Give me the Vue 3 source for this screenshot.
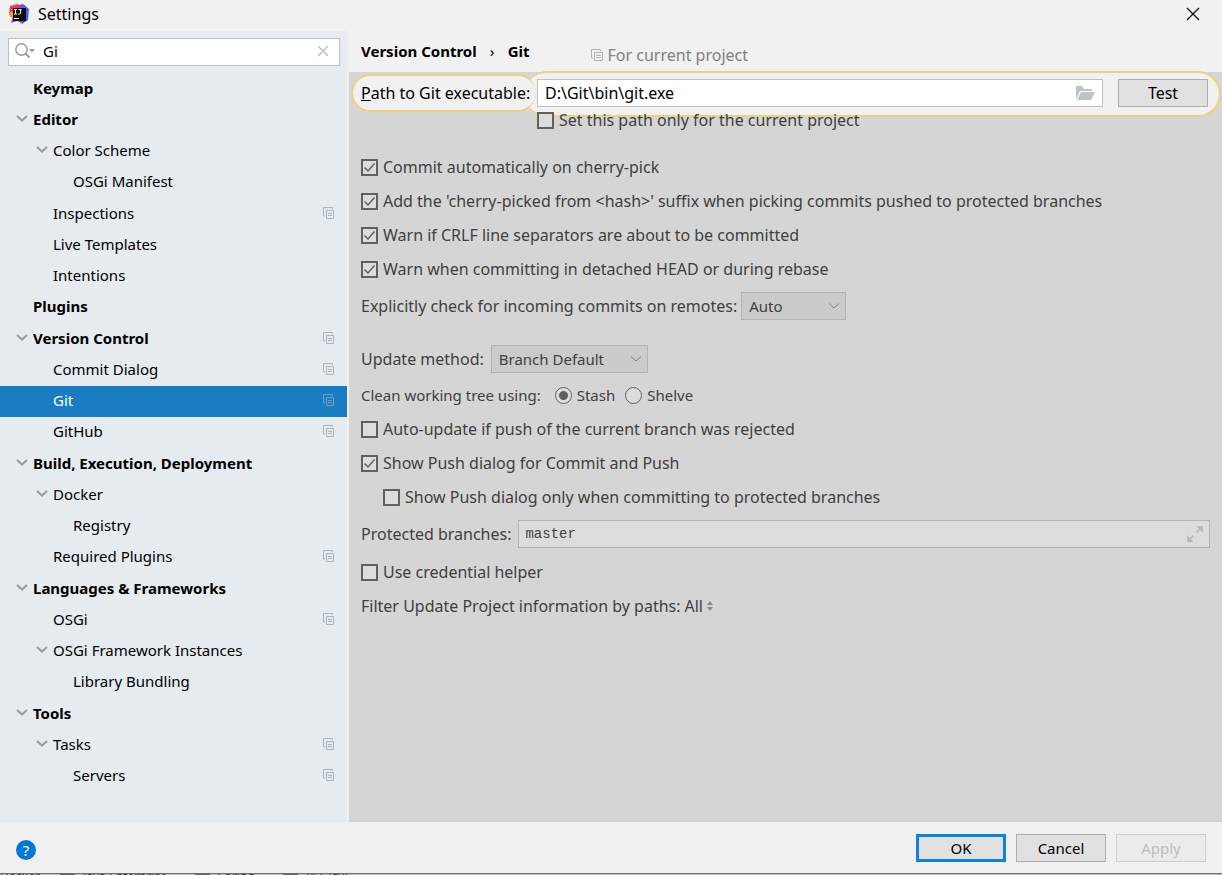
<script setup>
import { ref } from 'vue'

const query = ref('Gi')
const gitPath = ref('D:\\Git\\bin\\git.exe')
const branches = ref('master')
const selected = ref('Git')
const clean = ref('stash')
const incoming = ref('Auto')
const method = ref('Branch Default')
const pathOnly = ref(false)
const autoUpdate = ref(false)
const pushDialog = ref(true)
const pushProtected = ref(false)
const credential = ref(false)

const commitOptions = ref([
  { label: 'Commit automatically on cherry-pick', on: true },
  { label: "Add the 'cherry-picked from <hash>' suffix when picking commits pushed to protected branches", on: true },
  { label: 'Warn if CRLF line separators are about to be committed', on: true },
  { label: 'Warn when committing in detached HEAD or during rebase', on: true },
])

const tree = [
  { label: 'Keymap', level: 0 },
  { label: 'Editor', level: 0, open: true },
  { label: 'Color Scheme', level: 1, open: true },
  { label: 'OSGi Manifest', level: 2 },
  { label: 'Inspections', level: 1, copy: true },
  { label: 'Live Templates', level: 1 },
  { label: 'Intentions', level: 1 },
  { label: 'Plugins', level: 0 },
  { label: 'Version Control', level: 0, open: true, copy: true },
  { label: 'Commit Dialog', level: 1, copy: true },
  { label: 'Git', level: 1, copy: true },
  { label: 'GitHub', level: 1, copy: true },
  { label: 'Build, Execution, Deployment', level: 0, open: true },
  { label: 'Docker', level: 1, open: true },
  { label: 'Registry', level: 2 },
  { label: 'Required Plugins', level: 1, copy: true },
  { label: 'Languages & Frameworks', level: 0, open: true },
  { label: 'OSGi', level: 1, copy: true },
  { label: 'OSGi Framework Instances', level: 1, open: true },
  { label: 'Library Bundling', level: 2 },
  { label: 'Tools', level: 0, open: true },
  { label: 'Tasks', level: 1, open: true, copy: true },
  { label: 'Servers', level: 2, copy: true },
]
</script>

<template>
  <div class="window">
    <header class="titlebar">
      <svg class="logo" viewBox="0 0 20 20" aria-hidden="true">
        <path d="M1 2 9 0 12 4 4 13 0 10Z" fill="#f9364f" />
        <path d="M0 9 5 7 8 15 1 13Z" fill="#fc9a2b" />
        <path d="M10 1 14 0 20 5 19 16 13 20 9 16Z" fill="#3b63f0" />
        <path d="M12 1 15 1 18 4 16 8 11 6Z" fill="#7a4fe0" />
        <path d="M2 19 4 12 11 15 13 19 8 17Z" fill="#b13ae0" />
        <path d="M4 4h13v13H4z" fill="#0a0a0a" />
        <path d="M5 5.500h3M6.500 5.500v4.500M5 10h3M9.500 5.500h3M11.700 5.500v3.500q0 1-1 1h-1.500M5 14.500h5" stroke="#fff" stroke-width="1" fill="none" />
      </svg>
      <h1>Settings</h1>
      <button class="close" aria-label="Close">
        <svg viewBox="0 0 12 12"><path d="M0 0 12 12M12 0 0 12" stroke="#111" stroke-width="1.300" fill="none" /></svg>
      </button>
    </header>

    <div class="body">
      <aside class="sidebar">
        <div class="search">
          <svg class="glass" viewBox="0 0 20 16" aria-hidden="true">
            <circle cx="6.500" cy="6.500" r="5.700" fill="none" stroke="#8f9ba4" stroke-width="1.400" />
            <path d="M10.500 10.500 14.500 14.500" stroke="#8f9ba4" stroke-width="1.800" />
            <path d="M14 6h6l-3 3.500Z" fill="#8f9ba4" />
          </svg>
          <input v-model="query" type="text" aria-label="Search settings" />
          <button class="clear" aria-label="Clear search">
            <svg viewBox="0 0 10 10"><path d="M0 0 10 10M10 0 0 10" stroke="#b4bcc1" stroke-width="1.200" fill="none" /></svg>
          </button>
        </div>
        <nav class="tree" aria-label="Settings sections">
          <button
            v-for="item in tree"
            :key="item.label"
            class="node"
            :class="['level' + item.level, { selected: selected === item.label }]"
            @click="selected = item.label"
          >
            <span class="twist">
              <svg v-if="item.open" viewBox="0 0 12 8"><path d="M1 1 6 5.500 11 1" fill="none" stroke="#999da0" stroke-width="2.200" /></svg>
            </span>
            <span class="name">{{ item.label }}</span>
            <svg v-if="item.copy" class="copy" viewBox="0 0 12 12">
              <path d="M9.500 2V.5H.5v8.500H2" fill="none" stroke="#a9b4bc" />
              <path d="M3.500 11.500v-8h7v8z" fill="none" stroke="#a9b4bc" />
              <path d="M5 6.500h4M5 8.500h4" stroke="#a9b4bc" />
            </svg>
          </button>
        </nav>
      </aside>

      <main class="main">
        <div class="crumbs">
          <b>Version Control</b>
          <span class="sep">›</span>
          <b>Git</b>
          <span class="scope">
            <svg class="copy" viewBox="0 0 12 12" aria-hidden="true">
              <path d="M9.500 2V.5H.5v8.500H2" fill="none" stroke="#a9b4bc" />
              <path d="M3.500 11.500v-8h8v8z" fill="none" stroke="#a9b4bc" />
              <path d="M5 6.500h5M5 8.500h5" stroke="#a9b4bc" />
            </svg>
            For current project
          </span>
        </div>

        <form class="panel" @submit.prevent>
          <div class="spotlight">
            <label class="halo caption" for="git-path"><span><u>P</u>ath to Git executable:</span></label>
            <div class="halo wide">
              <div class="field path">
                <input id="git-path" v-model="gitPath" type="text" />
                <button type="button" class="icon" aria-label="Browse">
                  <svg class="folder" viewBox="0 0 19 15"><path d="M0 0h6l2 3h8v2H4L1 12H0z" fill="#bcc4c9" /><path d="M5 6h14l-4 8H1z" fill="#bcc4c9" /></svg>
                </button>
              </div>
              <button type="button" class="btn test">Test</button>
            </div>
          </div>

          <div class="shade">
            <label class="check only"><input v-model="pathOnly" type="checkbox" />Set this path only for the current project</label>

            <div class="stack commits">
              <label v-for="o in commitOptions" :key="o.label" class="check"><input v-model="o.on" type="checkbox" />{{ o.label }}</label>
            </div>

            <div class="row incoming">
              <label for="incoming">Explicitly check for incoming commits on remotes:</label>
              <span class="select">
                <select id="incoming" v-model="incoming"><option>Auto</option><option>Always</option><option>Never</option></select>
                <svg viewBox="0 0 10 6"><path d="M0 .5 5 5 10 .5" fill="none" stroke="#808080" /></svg>
              </span>
            </div>

            <div class="row method">
              <label for="method">Update method:</label>
              <span class="select long">
                <select id="method" v-model="method"><option>Branch Default</option><option>Merge</option><option>Rebase</option></select>
                <svg viewBox="0 0 10 6"><path d="M0 .5 5 5 10 .5" fill="none" stroke="#808080" /></svg>
              </span>
            </div>

            <div class="row clean" role="radiogroup" aria-label="Clean working tree using">
              <span class="title">Clean working tree using:</span>
              <label class="check"><input v-model="clean" type="radio" name="clean" value="stash" />Stash</label>
              <label class="check"><input v-model="clean" type="radio" name="clean" value="shelve" />Shelve</label>
            </div>

            <div class="stack push">
              <label class="check"><input v-model="autoUpdate" type="checkbox" />Auto-update if push of the current branch was rejected</label>
              <label class="check"><input v-model="pushDialog" type="checkbox" />Show Push dialog for Commit and Push</label>
              <label class="check nested"><input v-model="pushProtected" type="checkbox" />Show Push dialog only when committing to protected branches</label>
            </div>

            <div class="row protected">
              <label for="branches">Protected branches:</label>
              <div class="field dim">
                <input id="branches" v-model="branches" type="text" />
                <button type="button" class="icon" aria-label="Expand">
                  <svg class="expand" viewBox="0 0 16 16"><path d="M9 0h7v7zM0 9v7h7z" fill="#b4babd" /><path d="M13 3 9.500 6.500M3 13 6.500 9.500" stroke="#b4babd" stroke-width="1.600" /></svg>
                </button>
              </div>
            </div>

            <label class="check credential"><input v-model="credential" type="checkbox" />Use credential helper</label>

            <div class="row filter">
              <span>Filter Update Project information by paths:</span>
              <button type="button" class="link">
                All
                <svg viewBox="0 0 6 10"><path d="M0 4 3 0 6 4zM0 6h6L3 10z" fill="#8a8a8a" /></svg>
              </button>
            </div>
          </div>
        </form>
      </main>
    </div>

    <footer class="footer">
      <button class="help" aria-label="Help">?</button>
      <button class="btn primary">OK</button>
      <button class="btn">Cancel</button>
      <button class="btn" disabled>Apply</button>
    </footer>
    <div class="behind" aria-hidden="true">
      <span class="first">Docker</span><i></i><span>Java Enterprise</span><i class="far"></i><span>Spring</span><i class="far"></i><span>RESTful</span>
    </div>
  </div>
</template>

<style>
body { background: #f0f0f0; }
#app { display: flex; min-height: 100vh; }
</style>

<style scoped>
* { box-sizing: border-box; }
.window {
  flex: 1;
  display: flex;
  flex-direction: column;
  min-width: 0;
  background: #f0f0f0;
  color: #000;
  font: 15px/20px "Noto Sans", "Open Sans", sans-serif;
}
button, input, select { font: inherit; color: inherit; margin: 0; padding: 0; border: 0; background: none; border-radius: 0; outline: 0; }
svg { display: block; overflow: visible; flex: none; }

.titlebar { display: flex; align-items: center; height: 31px; padding: 0 23px 3px 9px; gap: 9px; background: #f1f1f1; }
.logo { width: 20px; height: 20px; }
h1 { flex: 1; margin: 0; font: inherit; font-size: 16px; }
.close svg { width: 12px; height: 12px; }

.body { flex: 1; display: flex; }
.sidebar { flex: none; width: 347px; margin-right: 2px; background: #e5ebef; }
.search { display: flex; align-items: center; height: 28px; margin: 7px 7px 8px 8px; padding: 0 11px 2px 6px; border: 1px solid #bcc0c2; background: #fff; }
.glass { width: 20px; height: 16px; }
.search input { flex: 1; min-width: 0; padding-left: 8px; }
.clear svg { width: 10px; height: 10px; }

.tree { display: flex; flex-direction: column; }
.node { display: flex; align-items: center; height: 31px; text-align: left; padding-right: 12px; padding-bottom: 3px; }
.node:nth-child(4n) { margin-bottom: 1px; }
.twist { width: 12px; margin-right: 5px; }
.twist svg { width: 12px; height: 8px; }
.name { flex: 1; }
.level0 { padding-left: 16px; font-weight: 700; }
.level1 { padding-left: 36px; }
.level2 { padding-left: 56px; }
.selected { background: #1a7dc4; color: #fff; }
.copy { width: 12px; height: 12px; }
.selected .copy { opacity: .6; }

.main { flex: 1; min-width: 0; display: flex; flex-direction: column; }
.crumbs { display: flex; align-items: center; height: 41px; padding: 0 0 2px 12px; background: #f1f1f1; }
.crumbs b { font-weight: 700; }
.sep { width: 31px; text-align: center; }
.scope { display: flex; align-items: center; gap: 5px; margin-left: 61px; padding-top: 8px; font-size: 16px; color: #808080; }

.panel { flex: 1; background: #d5d5d5; color: #404040; font-size: 16px; }
.spotlight { display: flex; align-items: center; height: 44px; padding: 0 0 2px 2px; color: #000; }
.halo { display: flex; align-items: center; border: 2px solid #ecd27c; background: #f1f1f1; }
.caption { position: relative; z-index: 1; width: 185px; height: 38px; margin-right: -12px; padding-left: 8px; border-right: 0; border-radius: 19px; white-space: nowrap; }
.wide { flex: 1; height: 46px; margin: 2px 1px 0 0; padding: 0 11px 2px 13px; gap: 15px; border-left: 0; border-radius: 23px; }
.field { flex: 1; min-width: 0; display: flex; align-items: center; height: 28px; padding: 0 7px; border: 1px solid #bdbdbd; background: #fff; }
.field input { flex: 1; min-width: 0; }
.folder { width: 19px; height: 15px; }
.btn { width: 90px; height: 28px; border: 1px solid #adadad; background: #e1e1e1; text-align: center; }
.btn:disabled { border-color: #cfcfcf; background: #ebebeb; color: #bdbdbd; }
.btn.primary { border: 3px solid #0a84de; }

.shade { padding: 0 12px; }
.check { display: flex; align-items: center; gap: 5px; width: max-content; }
.check input { appearance: none; width: 17px; height: 17px; border: 2px solid #606060; background: #dcdcdc; }
.check input[type="checkbox"]:checked { background: #dcdcdc url("data:image/svg+xml,%3Csvg xmlns='http://www.w3.org/2000/svg' viewBox='0 0 13 13'%3E%3Cpath d='M1.500 6.500 5 10 11.500 2.500' fill='none' stroke='%23606060' stroke-width='1.500'/%3E%3C/svg%3E") center / 13px 13px no-repeat; }
.check input[type="radio"] { border-radius: 50%; border-width: 1px; }
.check input[type="radio"]:checked { background: radial-gradient(circle, #606060 4px, #dcdcdc 5px); }
.only { margin: -6px 0 0 176px; }
.stack { display: grid; grid-auto-rows: 34px; align-items: center; }
.commits { margin-top: 20px; }
.row { display: flex; align-items: center; }
.incoming { gap: 4px; margin-top: 6px; }
.select { position: relative; display: flex; width: 105px; font-size: 15px; }
.select.long { width: 157px; }
.select select { appearance: none; width: 100%; height: 28px; padding-left: 7px; border: 1px solid #b2b2b2; background: #cbcbcb; }
.select svg { position: absolute; right: 7px; top: 11px; width: 10px; height: 6px; pointer-events: none; }
.method { gap: 7px; margin-top: 25px; }
.clean { gap: 10px; height: 34px; margin-top: 5px; font-size: 15px; }
.title { margin-right: 4px; }
.nested { margin-left: 22px; }
.protected { gap: 7px; margin-top: 6px; }
.dim { background: #dcdcdc; border-color: #b4b4b4; padding: 0 6px; }
.dim input { font: 14px/20px "Liberation Mono", monospace; }
.expand { width: 16px; height: 16px; }
.credential { margin-top: 14px; }
.filter { gap: 4px; margin-top: 14px; }
.link { display: flex; align-items: center; gap: 4px; }
.link svg { width: 6px; height: 10px; }

.footer { display: flex; align-items: center; gap: 10px; height: 51px; padding: 0 16px; }
.help { width: 20px; height: 20px; margin: 4px auto 0 0; border-radius: 50%; background: #0078d7; color: #fff; line-height: 20px; text-align: center; }
.behind { display: flex; height: 2px; overflow: hidden; border-top: 1px solid #6e6e6e; background: #bfc4bf; color: #333; font-size: 12px; line-height: 6px; white-space: nowrap; }
.first { width: 60px; }
.behind i { width: 15px; margin-right: 8px; background: #666; }
.behind .far { margin-left: 28px; }
</style>
